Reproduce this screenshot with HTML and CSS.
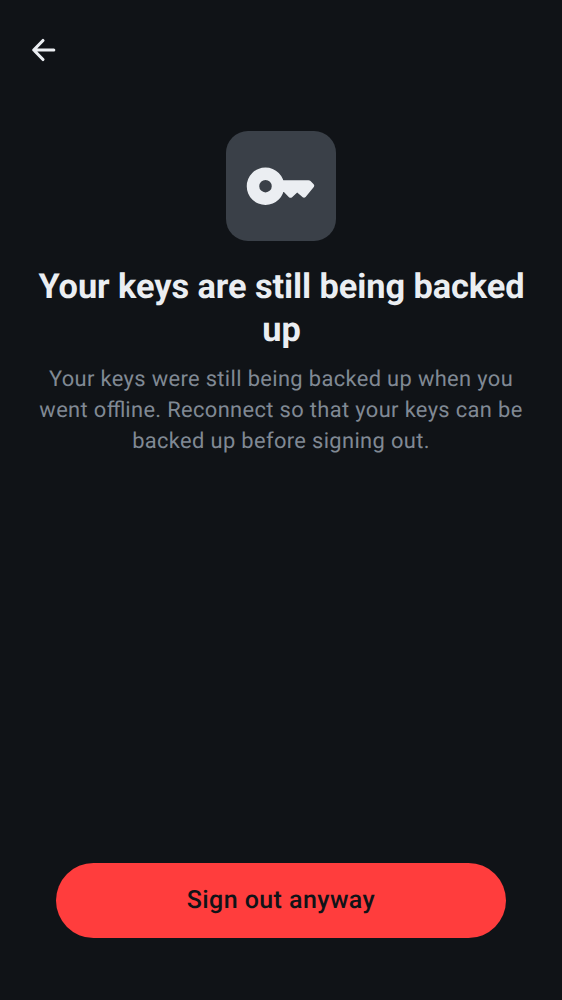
FILE: index.html
```html
<!DOCTYPE html>
<html lang="en">
<head>
<meta charset="utf-8">
<title>Sign out</title>
<link rel="stylesheet" href="styles.css">
</head>
<body>
<main class="screen">
  <header class="topbar">
    <button class="back" aria-label="Back">
      <svg class="back-icon" viewBox="0 0 38 38"><path d="M18 9.500 8.700 19 18 28.500M9 19H28.800"/></svg>
    </button>
  </header>
  <section class="content">
    <div class="tile">
      <svg class="key-icon" viewBox="0.300 0.300 75 75"><path fill-rule="evenodd" d="M21.800 18.750a18.750 18.750 0 1 0 0 37.500a18.750 18.750 0 0 0 0-37.500M21.800 31.250a6.250 6.250 0 1 1 0 12.500a6.250 6.250 0 0 1 0-12.500"/><path d="M38 31.500H64.800Q66 31.500 66.800 32.300L70 35.500Q71.200 37 70.100 38.400L61.900 48.200Q60.500 49.600 59 48.500L53.500 43.700 48.400 48.500Q46.800 49.800 45.300 48.500L40.200 43.300H36Z"/></svg>
    </div>
    <h1 class="title">Your keys are still being backed up</h1>
    <p class="subtitle">Your keys were still being backed up when you went o<span class="ligature">ffl</span>ine. Reconnect so that your keys can be backed up before signing out.</p>
  </section>
  <footer class="actions"><button class="danger">Sign out anyway</button></footer>
</main>
</body>
</html>
```
FILE: styles.css
```css
* { box-sizing: border-box; }
body { margin: 0; background: #101317; font-family: Roboto, sans-serif; text-rendering: geometricPrecision; }
.screen { display: flex; flex-direction: column; width: 562px; height: 1000px; }
.topbar { display: flex; align-items: center; height: 100px; padding-left: 25px; }
.back { display: flex; padding: 0; border: 0; background: none; }
.back-icon { width: 38px; height: 38px; fill: none; stroke: #ebeef2; stroke-width: 3.1; stroke-linecap: round; stroke-linejoin: round; }
.content { display: flex; flex: 1; flex-direction: column; align-items: center; padding: 31px 25px 0; text-align: center; }
.tile { display: flex; align-items: center; justify-content: center; width: 110px; height: 110px; padding-left: 1px; border-radius: 22px; background: #3a4048; }
.key-icon { width: 75px; height: 75px; fill: #ebeef2; }
.title { margin: 24.7px 0 0; padding-left: 1px; color: #ebeef2; font-size: 34.375px; line-height: 43px; font-weight: 700; letter-spacing: -.08px; }
.subtitle { margin: 12.3px 0 0; color: #808994; font-size: 21.875px; line-height: 31.1px; font-weight: 400; letter-spacing: .36px; }
.ligature { letter-spacing: 0; }
.actions { padding: 0 56px 62px; }
.danger { display: block; width: 450px; height: 75px; padding: 0; border: 0; border-radius: 38px; background: #ff3d3d; color: #101317; font: 500 25px/37px Roboto, sans-serif; letter-spacing: .42px; text-rendering: geometricPrecision; }
```
